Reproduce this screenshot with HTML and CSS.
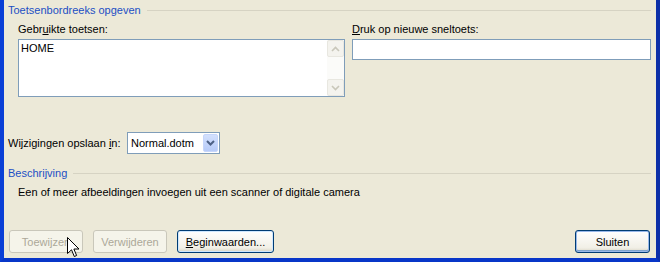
FILE: index.html
```html
<!DOCTYPE html>
<html lang="nl">
<head>
  <meta charset="UTF-8">
  <title>Toetsenbord aanpassen</title>
  <link rel="stylesheet" href="styles.css">
</head>
<body>
  <div class="dialog">
    <div class="group-title"><span>Toetsenbordreeks opgeven</span><div class="rule"></div></div>

    <div class="keys-row">
      <div class="col-left">
        <div class="label">Gebr<u>u</u>ikte toetsen:</div>
        <div class="listbox">
          <div class="list-items">HOME</div>
          <div class="scroll">
            <div class="scroll-btn">
              <svg width="9" height="6" viewBox="0 0 9 6"><path d="M1 5 L4.5 1.5 L8 5" fill="none" stroke="#c9c7ba" stroke-width="1.6"/></svg>
            </div>
            <div class="scroll-btn">
              <svg width="9" height="6" viewBox="0 0 9 6"><path d="M1 1 L4.5 4.5 L8 1" fill="none" stroke="#c9c7ba" stroke-width="1.6"/></svg>
            </div>
          </div>
        </div>
      </div>
      <div class="col-right">
        <div class="label"><u>D</u>ruk op nieuwe sneltoets:</div>
        <div class="textbox"></div>
      </div>
    </div>

    <div class="save-row">
      <span class="save-label">Wijzigingen opslaan <u>i</u>n:</span>
      <div class="select">
        <span class="select-value">Normal.dotm</span>
        <div class="select-btn">
          <svg width="9" height="6" viewBox="0 0 9 6"><path d="M1 1 L4.5 4.5 L8 1" fill="none" stroke="#4d6185" stroke-width="2"/></svg>
        </div>
      </div>
    </div>

    <div class="group-title desc-title"><span>Beschrijving</span><div class="rule"></div></div>
    <p class="description">Een of meer afbeeldingen invoegen uit een scanner of digitale camera</p>

    <div class="button-row">
      <button class="btn" disabled>Toewijzen</button>
      <button class="btn" disabled>Verwijderen</button>
      <button class="btn btn-focus"><u>B</u>eginwaarden...</button>
      <div class="spacer"></div>
      <button class="btn btn-default">Sluiten</button>
    </div>

    <svg class="cursor" width="13" height="21" viewBox="0 0 13 21">
      <path d="M0.5 0.5 L0.5 16.5 L4.5 12.8 L7.3 19.5 L9.6 18.5 L6.9 12 L12 12 Z" fill="#fff" stroke="#000" stroke-width="1"/>
    </svg>
  </div>
</body>
</html>
```

FILE: styles.css
```css
body {
  margin: 0;
  font-family: Tahoma, "Liberation Sans", Arial, sans-serif;
  font-size: 11px;
  color: #000;
}
.dialog {
  position: relative;
  width: 660px;
  height: 262px;
  box-sizing: border-box;
  background: #ece9d8;
  border-left: 4px solid #0a3fd6;
  border-right: 4px solid #0c2fa8;
  border-bottom: 4px solid #0836c8;
  padding: 3px 5px 0 4px;
}
.group-title {
  display: flex;
  align-items: center;
  height: 13px;
  color: #1c4fc4;
}
.group-title .rule {
  flex: 1;
  height: 0;
  border-top: 1px solid #d6d3c3;
  margin-left: 6px;
  margin-top: 1px;
}
.keys-row {
  display: flex;
  gap: 7px;
  padding-left: 10px;
  margin-top: 7px;
}
.label {
  height: 13px;
  line-height: 13px;
  margin-bottom: 3px;
}
u {
  text-decoration: underline;
  text-underline-offset: 1px;
}
.col-left {
  width: 327px;
}
.col-right {
  flex: 1;
}
.listbox {
  display: flex;
  height: 58px;
  box-sizing: border-box;
  border: 1px solid #7f9db9;
  background: #fff;
}
.list-items {
  flex: 1;
  padding: 2px 2px;
  line-height: 13px;
}
.scroll {
  width: 17px;
  display: flex;
  flex-direction: column;
  justify-content: space-between;
  background: #fbfbf9;
}
.scroll-btn {
  height: 17px;
  box-sizing: border-box;
  border: 1px solid #e8e7e0;
  border-radius: 2px;
  background: #f4f3ee;
  display: flex;
  align-items: center;
  justify-content: center;
}
.textbox {
  height: 21px;
  box-sizing: border-box;
  border: 1px solid #7f9db9;
  background: #fff;
}
.save-row {
  display: flex;
  align-items: center;
  margin-top: 35px;
}
.save-label {
  width: 119px;
}
.select {
  display: flex;
  align-items: center;
  width: 93px;
  height: 22px;
  box-sizing: border-box;
  border: 1px solid #7f9db9;
  background: #fff;
  padding: 1px;
}
.select-value {
  flex: 1;
  padding-left: 2px;
}
.select-btn {
  width: 15px;
  height: 18px;
  border-radius: 2px;
  background: linear-gradient(#d3e0fd, #b7cbf8);
  border: 1px solid #c6d6fb;
  box-sizing: border-box;
  display: flex;
  align-items: center;
  justify-content: center;
}
.desc-title {
  margin-top: 12px;
}
.description {
  margin: 7px 0 0 10px;
  line-height: 13px;
}
.button-row {
  display: flex;
  gap: 10px;
  margin-top: 31px;
  padding-left: 1px;
  padding-right: 1px;
}
.spacer {
  flex: 1;
}
.btn {
  font-family: inherit;
  font-size: 11px;
  height: 23px;
  width: 74px;
  padding: 0 4px;
  border: 1px solid #003c74;
  border-radius: 3px;
  background: linear-gradient(#ffffff, #f1efe6 80%, #d8d4c4);
  color: #000;
}
.btn:disabled {
  border-color: #c9c7ba;
  background: #f5f4ea;
  color: #aca899;
}
.btn-focus {
  width: 97px;
  box-shadow: inset 0 0 0 1px #cee7ff;
}
.btn-default {
  width: 75px;
  box-shadow: inset 0 0 0 1px #98b8ea, inset 0 -1px 0 1px #7da2ce;
}
.cursor {
  position: absolute;
  left: 63px;
  top: 237px;
}
```
